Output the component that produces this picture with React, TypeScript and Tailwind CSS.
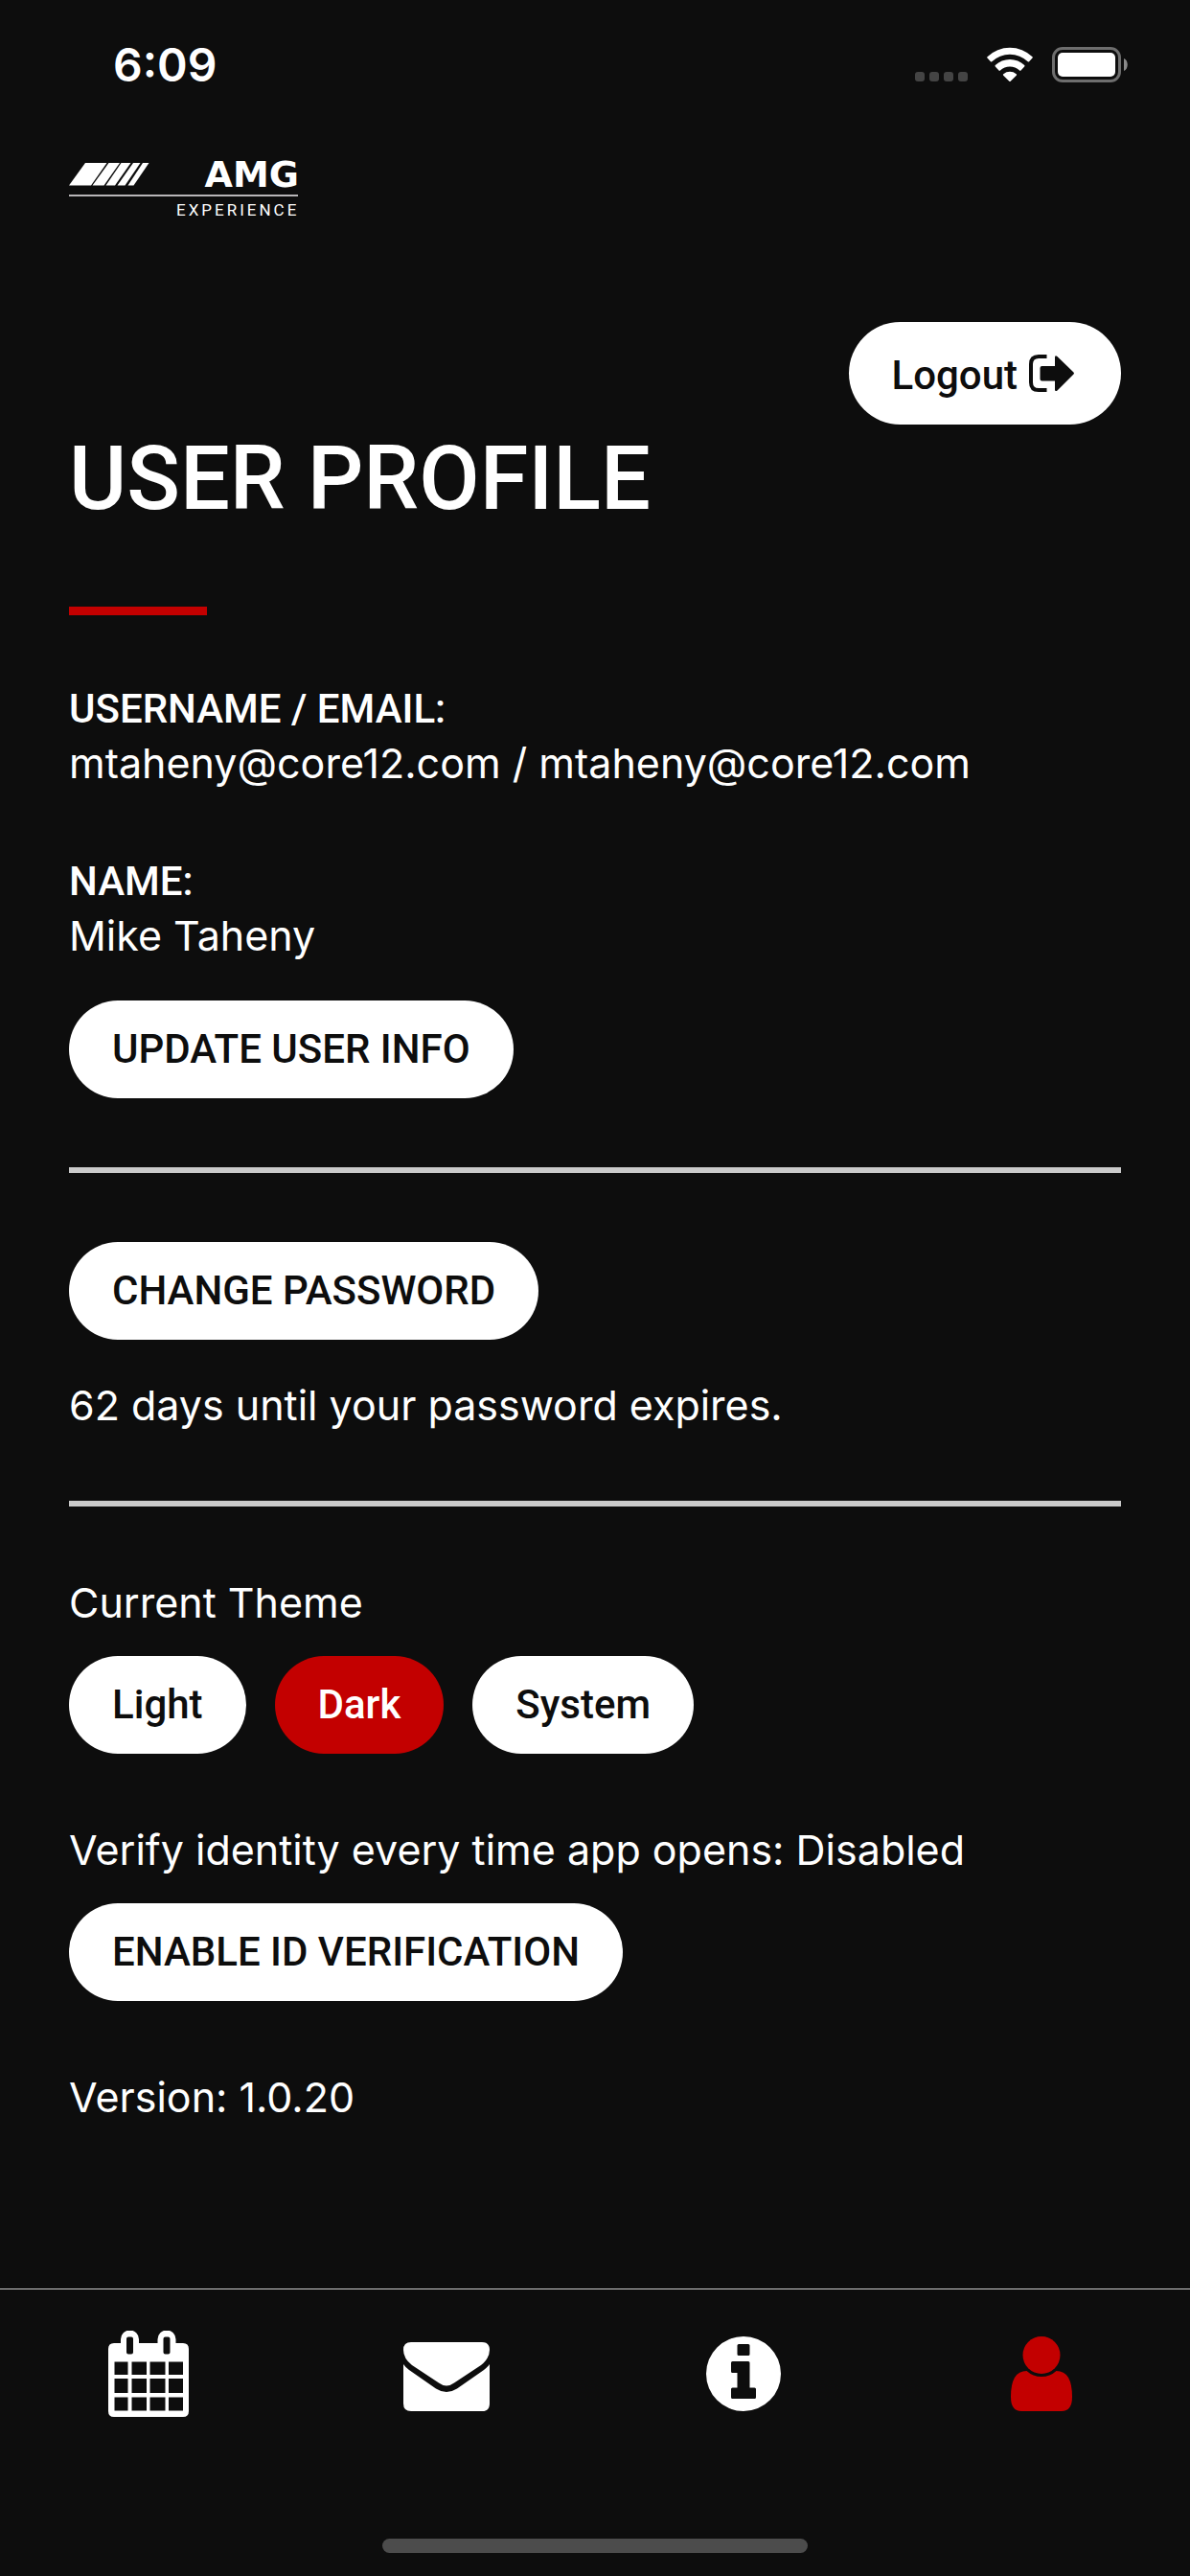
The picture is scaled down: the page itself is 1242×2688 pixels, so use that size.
import { useState } from "react";
import clsx from "clsx";

type Theme = "Light" | "Dark" | "System";

const themes: Theme[] = ["Light", "Dark", "System"];

function StatusBar() {
  return (
    <div className="flex h-[132px] items-start justify-between pl-[118px] pr-16">
      <time className="mt-10 font-['Inter',sans-serif] text-[48px] leading-[56px] font-semibold">6:09</time>
      <div className="mt-[49px] flex h-[37px] items-end">
        <div className="mb-px flex gap-[5px]">
          <span className="size-[10px] rounded-[3px] bg-[#444444]" />
          <span className="size-[10px] rounded-[3px] bg-[#444444]" />
          <span className="size-[10px] rounded-[3px] bg-[#444444]" />
          <span className="size-[10px] rounded-[3px] bg-[#444444]" />
        </div>
        <svg className="mb-px ml-5 h-9 w-12" viewBox="0 0 48 36" fill="currentColor" aria-label="Wi-Fi">
          <path d="M.5 10.2a34 34 0 0 1 47 0q.7.7 0 1.4l-3.400 3.600q-.7.7-1.400 0a27.200 27.200 0 0 0-37.400 0q-.7.7-1.400 0L.5 11.600q-.7-.7 0-1.400z" />
          <path d="M8.800 19.100a22 22 0 0 1 30.400 0q.7.7 0 1.400l-3.700 4q-.7.7-1.400.1a14.800 14.800 0 0 0-20.200 0q-.7.6-1.400-.1l-3.700-4q-.7-.7 0-1.400z" />
          <path d="M17.300 28.300a10.400 10.400 0 0 1 13.400 0q.8.7.1 1.400l-6.100 6q-.7.7-1.400 0l-6.100-6q-.7-.7.1-1.400z" />
        </svg>
        <svg className="ml-5 h-[37px] w-[80px]" viewBox="0 0 80 37" aria-label="Battery">
          <rect x="1.500" y="1.500" width="69" height="34" rx="9.500" fill="none" stroke="#6e6e6e" strokeWidth="3" />
          <rect x="6" y="6" width="60" height="25" rx="5" fill="#fff" />
          <path d="M75 12c5 2 5 11 0 13z" fill="#8a8a8a" />
        </svg>
      </div>
    </div>
  );
}

function Logo() {
  return (
    <svg className="h-[60px] w-[240px] overflow-visible" viewBox="0 0 240 60" fill="currentColor" role="img" aria-label="AMG Experience">
      <path d="M17 0h22.500L23 23.500H0z" />
      <path d="M41.500 0h11.500L36.500 23.500h-12z" />
      <path d="M54.500 0h10L48 23.500h-9.500z" />
      <path d="M67 0h7.500L58.500 23.500h-8z" />
      <path d="M77 0h6.500L67.500 23.500h-6z" />
      <text x="240" y="25" textAnchor="end" className="font-['DejaVu_Sans',sans-serif] text-[38px] font-bold">AMG</text>
      <rect y="33" width="239" height="2" fill="#b8b6b8" />
      <text x="112" y="55" className="font-['Roboto',sans-serif] text-[17px] tracking-[3px]">EXPERIENCE</text>
    </svg>
  );
}

function LogoutIcon() {
  return (
    <svg className="h-10 w-12" viewBox="0 0 48 40" fill="currentColor" aria-hidden="true">
      <path d="M18.500 2H10Q2 2 2 10v19q0 8 8 8h8.500" fill="none" stroke="currentColor" strokeWidth="4" strokeLinecap="butt" />
      <path d="M13.500 12H27V3q0-3 2.500-1l17 16.500q1 1 0 2L29.500 37.500Q27 39 27 36.500v-9H13.500q-2 0-2-2V14q0-2 2-2z" />
    </svg>
  );
}

function CalendarIcon() {
  return (
    <svg className="h-[90px] w-[84px]" viewBox="0 0 84 90" fill="currentColor" aria-hidden="true">
      <path
        fillRule="evenodd"
        d="M6 13h7V9a9.500 9.500 0 0 1 19 0v4h19.500V9a9.500 9.500 0 0 1 19 0v4H78q6 0 6 6v65q0 6-6 6H6q-6 0-6-6V19q0-6 6-6z
        M21 6.500q-2 0-2 2v14q0 2 2 2h3q2 0 2-2v-14q0-2-2-2z
        M59.500 6.500q-2 0-2 2v14q0 2 2 2h3q2 0 2-2v-14q0-2-2-2z
        M6.500 32.500V46h14V32.500z M24.500 32.500V46h15.500V32.500z M43.500 32.500V46h16V32.500z M63 32.500V46h15V32.500z
        M6.500 50v15h14V50z M24.500 50v15h15.500V50z M43.500 50v15h16V50z M63 50v15h15V50z
        M6.500 69.500v14h14v-14z M24.500 69.500v14h15.500v-14z M43.500 69.500v14h16v-14z M63 69.500v14h15v-14z"
      />
    </svg>
  );
}

function MailIcon() {
  return (
    <svg className="h-[78px] w-[90px]" viewBox="0 -6 90 78" fill="currentColor" aria-hidden="true">
      <path d="M8 0h74q8 0 8 8 0 9-9 16L53 42.500q-8 6-16 0L9 24Q0 17 0 8 0 0 8 0z" />
      <path d="M0 23q2 3 6 6l28 19.500q11 7 22 0L84 29q4-3 6-6v41q0 8-8 8H8q-8 0-8-8z" />
    </svg>
  );
}

function InfoIcon() {
  return (
    <svg className="size-[78px]" viewBox="0 0 78 78" fill="currentColor" aria-hidden="true">
      <path
        fillRule="evenodd"
        d="M39 0a39 39 0 1 1 0 78 39 39 0 0 1 0-78z
        M34 8q-1.500 0-1.500 1.500v9q0 1.500 1.500 1.500h10q1.500 0 1.500-1.500v-9Q45.500 8 44 8z
        M27.500 26q-1.500 0-1.500 1.500v9q0 1.500 1.500 1.500h5v15.500h-5q-1.500 0-1.500 1.500v8.500q0 1.500 1.500 1.500h23q1.500 0 1.500-1.500V55q0-1.500-1.500-1.500h-5v-26q0-1.500-1.500-1.500z"
      />
    </svg>
  );
}

function UserIcon() {
  return (
    <svg className="h-[78px] w-[64px]" viewBox="0 0 64 78" fill="currentColor" aria-hidden="true">
      <circle cx="32" cy="19.500" r="19.500" />
      <path d="M16.500 36Q23 42 32 42t15.500-6Q64 36 64 63q0 15-11 15H11Q0 78 0 63 0 36 16.500 36z" />
    </svg>
  );
}

interface PillButtonProps {
  children: React.ReactNode;
  active?: boolean;
  pressed?: boolean;
  onClick?: () => void;
}

function PillButton({ children, active, pressed, onClick }: PillButtonProps) {
  return (
    <button
      type="button"
      aria-pressed={pressed}
      onClick={onClick}
      className={clsx(
        "h-[102px] rounded-full px-[45px] font-['Roboto',sans-serif] text-[42px] leading-[56px] font-medium whitespace-nowrap",
        active ? "bg-[#c30000] text-white" : "bg-white text-[#0d0d0d]"
      )}
    >
      {children}
    </button>
  );
}

function Field({ label, value }: { label: string; value: string }) {
  return (
    <div>
      <dt className="font-['Roboto',sans-serif] text-[42px] leading-[56px] font-medium">{label}</dt>
      <dd>{value}</dd>
    </div>
  );
}

const tabs = [
  { label: "Calendar", href: "#calendar", icon: <CalendarIcon /> },
  { label: "Messages", href: "#messages", icon: <MailIcon /> },
  { label: "Information", href: "#information", icon: <InfoIcon /> },
  { label: "Profile", href: "#profile", icon: <UserIcon />, current: true },
];

export default function App() {
  const [theme, setTheme] = useState<Theme>("Dark");

  return (
    <div className="flex min-h-screen flex-col bg-[#0d0d0d] font-['Inter',sans-serif] text-[43px] leading-[56px] text-white">
      <StatusBar />
      <header className="px-[72px] pt-[38px]">
        <Logo />
      </header>

      <main className="flex flex-col px-[72px] pt-[106px] pb-20">
        <button
          type="button"
          className="flex h-[107px] items-center gap-3 self-end rounded-full bg-white pr-12 pl-[45px] font-['Roboto',sans-serif] text-[42px] font-medium text-[#0d0d0d]"
        >
          <span className="pt-1">Logout</span>
          <LogoutIcon />
        </button>
        <h1 className="font-['Roboto',sans-serif] text-[92px] leading-[114px] font-medium">USER PROFILE</h1>
        <div className="mt-[76px] h-[9px] w-36 bg-[#c30000]" />

        <dl className="mt-[70px] flex flex-col gap-[68px]">
          <Field label="USERNAME / EMAIL:" value="mtaheny@core12.com / mtaheny@core12.com" />
          <Field label="NAME:" value="Mike Taheny" />
        </dl>
        <div className="mt-10">
          <PillButton>UPDATE USER INFO</PillButton>
        </div>

        <hr className="my-[72px] border-t-[6px] border-[#cacaca]" />

        <div>
          <PillButton>CHANGE PASSWORD</PillButton>
        </div>
        <p className="mt-10">62 days until your password expires.</p>

        <hr className="my-[72px] border-t-[6px] border-[#cacaca]" />

        <h2>Current Theme</h2>
        <div className="mt-7 flex gap-[30px]">
          {themes.map((t) => (
            <PillButton key={t} active={t === theme} pressed={t === theme} onClick={() => setTheme(t)}>
              {t}
            </PillButton>
          ))}
        </div>

        <p className="mt-[72px]">Verify identity every time app opens: Disabled</p>
        <div className="mt-7">
          <PillButton>ENABLE ID VERIFICATION</PillButton>
        </div>
        <p className="mt-[72px]">Version: 1.0.20</p>
      </main>

      <footer className="mt-auto flex h-[300px] flex-col items-center justify-between border-t border-[#cacaca] pb-6">
        <nav className="mt-[43px] grid w-full grid-cols-4">
          {tabs.map((tab) => (
            <a
              key={tab.label}
              href={tab.href}
              aria-label={tab.label}
              aria-current={tab.current ? "page" : undefined}
              className={clsx("flex h-[90px] items-center justify-center", tab.current && "text-[#c30000]")}
            >
              {tab.icon}
            </a>
          ))}
        </nav>
        <div className="h-[15px] w-[444px] rounded-full bg-[#4c4c4c]" />
      </footer>
    </div>
  );
}
